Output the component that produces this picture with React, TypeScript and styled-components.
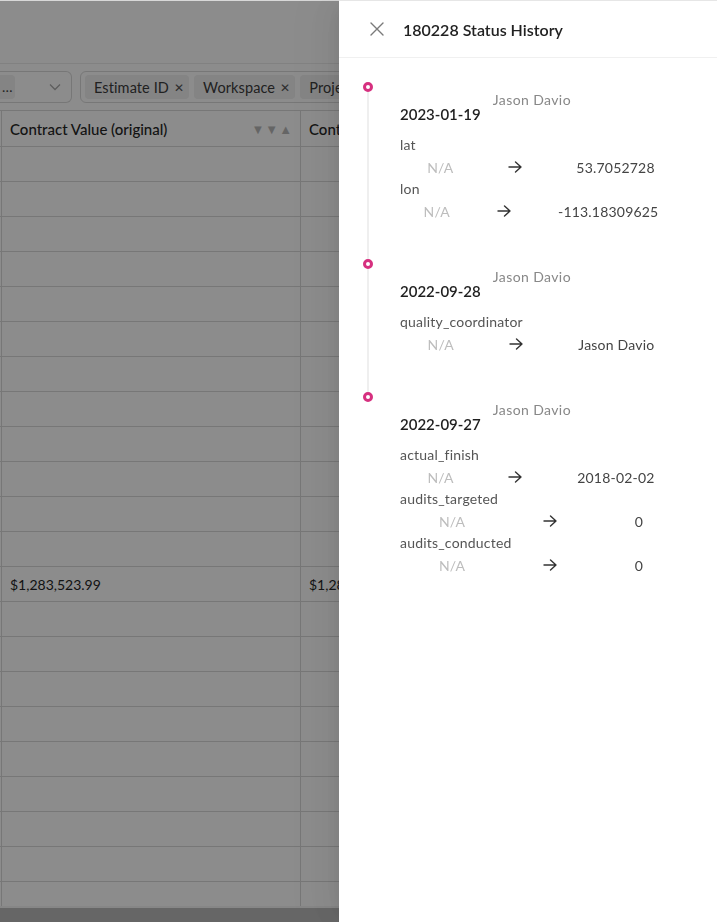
import React from "react";
import styled, { createGlobalStyle } from "styled-components";

const GlobalStyle = createGlobalStyle`
  html, body { margin: 0; padding: 0; }
  body {
    font-family: Lato, "Noto Sans", sans-serif;
    background: #ffffff;
    overflow: hidden;
  }
  * { box-sizing: border-box; }
`;

const Page = styled.div`
  height: 922px;
  display: flex;
  flex-direction: column;
  border-top: 1px solid #d8d8d8;
  overflow: hidden;
`;

const TopBar = styled.div`
  height: 63px;
  border-bottom: 1px solid #ececec;
  flex: none;
`;

const FilterRow = styled.div`
  display: flex;
  align-items: center;
  gap: 8px;
  padding: 7px 0;
  flex: none;
  white-space: nowrap;
`;

const SelectBox = styled.div`
  width: 72px;
  height: 32px;
  border: 1px solid #d9d9d9;
  border-left: none;
  border-radius: 0 6px 6px 0;
  display: flex;
  align-items: center;
  justify-content: space-between;
  padding: 0 10px 0 0;
  color: #444;
  font-size: 14px;
`;

const SelectValue = styled.span`
  background: #f0f0f0;
  height: 24px;
  line-height: 24px;
  padding: 0 2px;
  border-radius: 0 4px 4px 0;
`;

const ChipGroup = styled.div`
  height: 32px;
  border: 1px solid #d9d9d9;
  border-radius: 6px;
  display: flex;
  align-items: center;
  gap: 5px;
  padding: 0 4px;
  flex: 1;
  overflow: hidden;
`;

const Chip = styled.span`
  height: 24px;
  background: #f0f0f0;
  border-radius: 4px;
  display: inline-flex;
  align-items: center;
  gap: 5px;
  padding: 0 5px 0 9px;
  font-size: 14.5px;
  letter-spacing: 0.1px;
  color: #3c3c3c;
  flex: none;
`;

const ChipX = styled.span`
  font-size: 12px;
  color: #555;
`;

const Table = styled.div`
  flex: 1;
  border-top: 1px solid #d9d9d9;
  overflow: hidden;
  display: flex;
  flex-direction: column;
`;

const Row = styled.div<{ $head?: boolean }>`
  display: grid;
  grid-template-columns: 300px 300px 300px;
  height: ${(p) => (p.$head ? "36px" : "35px")};
  border-bottom: 1px solid #d9d9d9;
  flex: none;
`;

const Cell = styled.div<{ $head?: boolean }>`
  border-left: 1px solid #d9d9d9;
  padding: 0 8px;
  display: flex;
  align-items: center;
  justify-content: space-between;
  font-size: ${(p) => (p.$head ? "15px" : "14px")};
  font-weight: ${(p) => (p.$head ? 500 : 400)};
  color: #262626;
  white-space: nowrap;
  overflow: hidden;
  &:first-child { margin-left: 1px; }
`;

const SortIcons = styled.span`
  display: flex;
  gap: 1px;
  color: #b9b9b9;
  font-size: 13px;
`;

const ScrollBar = styled.div`
  height: 16px;
  border-top: 2px solid #f4f4f4;
  background: #bbbbbb;
  flex: none;
`;

const Overlay = styled.div`
  position: fixed;
  inset: 1px 0 0 0;
  background: rgba(0, 0, 0, 0.45);
`;

const Drawer = styled.aside`
  position: fixed;
  top: 0;
  right: 0;
  bottom: 0;
  width: 378px;
  background: #fff;
  border-top: 1px solid #e6e6e6;
  box-shadow: -6px 0 16px -8px rgba(0, 0, 0, 0.08),
    -9px 0 28px 0 rgba(0, 0, 0, 0.05), -12px 0 48px 16px rgba(0, 0, 0, 0.03);
  display: flex;
  flex-direction: column;
`;

const DrawerHeader = styled.header`
  height: 57px;
  border-bottom: 1px solid #f0f0f0;
  display: flex;
  align-items: center;
  gap: 19px;
  padding: 0 0 0 31px;
  flex: none;
`;

const CloseButton = styled.button`
  border: none;
  background: none;
  padding: 0;
  width: 14px;
  height: 14px;
  display: flex;
  color: #7a7a7a;
  cursor: pointer;
`;

const Title = styled.h2`
  margin: 0;
  font-size: 16px;
  font-weight: 600;
  color: #222;
`;

const DrawerBody = styled.div`
  padding: 24px 35px 24px 24px;
  display: flex;
  flex-direction: column;
`;

const Item = styled.div`
  display: flex;
  gap: 27px;
`;

const Rail = styled.div`
  width: 10px;
  display: flex;
  flex-direction: column;
  align-items: center;
  flex: none;
`;

const Dot = styled.span`
  width: 10px;
  height: 10px;
  border-radius: 50%;
  border: 3px solid #d6307f;
  background: #fff;
  flex: none;
`;

const Tail = styled.span<{ $hidden?: boolean }>`
  width: 2px;
  flex: 1;
  background: ${(p) => (p.$hidden ? "transparent" : "#efefef")};
`;

const Content = styled.div<{ $last?: boolean }>`
  width: 282px;
  display: flex;
  flex-direction: column;
  padding-bottom: ${(p) => (p.$last ? "0" : "37px")};
`;

const ItemHead = styled.div`
  display: flex;
  align-items: flex-start;
  gap: 12px;
  height: 44px;
  margin-bottom: 8px;
`;

const DateText = styled.span`
  margin-top: 22px;
  font-size: 15px;
  line-height: 20px;
  font-weight: 600;
  color: #1f1f1f;
`;

const Author = styled.span`
  margin-top: 9px;
  font-size: 14px;
  line-height: 18px;
  color: #888;
  letter-spacing: 0.4px;
`;

const FieldName = styled.div`
  font-size: 14px;
  line-height: 22px;
  color: #555;
  letter-spacing: 0.2px;
`;

const ChangeRow = styled.div`
  display: flex;
  justify-content: space-around;
  align-items: center;
  height: 22px;
  font-size: 14px;
  letter-spacing: 0.2px;
`;

const OldValue = styled.span`
  color: #bdbdbd;
`;

const NewValue = styled.span`
  color: #444;
`;

const ArrowIcon = () => (
  <svg width="14" height="12" viewBox="0 0 14 12" fill="none" stroke="#333" strokeWidth="1.4" strokeLinecap="round" strokeLinejoin="round">
    <path d="M1 6h12M7.5 1l5.5 5-5.5 5" />
  </svg>
);

const CloseIcon = () => (
  <svg width="14" height="14" viewBox="0 0 14 14" fill="none" stroke="currentColor" strokeWidth="1.4" strokeLinecap="round">
    <path d="M1 1l12 12M13 1L1 13" />
  </svg>
);

type Change = { field: string; from: string; to: string };
type Entry = { date: string; author: string; changes: Change[] };

const history: Entry[] = [
  {
    date: "2023-01-19",
    author: "Jason Davio",
    changes: [
      { field: "lat", from: "N/A", to: "53.7052728" },
      { field: "lon", from: "N/A", to: "-113.18309625" },
    ],
  },
  {
    date: "2022-09-28",
    author: "Jason Davio",
    changes: [{ field: "quality_coordinator", from: "N/A", to: "Jason Davio" }],
  },
  {
    date: "2022-09-27",
    author: "Jason Davio",
    changes: [
      { field: "actual_finish", from: "N/A", to: "2018-02-02" },
      { field: "audits_targeted", from: "N/A", to: "0" },
      { field: "audits_conducted", from: "N/A", to: "0" },
    ],
  },
];

const ROWS = 22;

export default function App() {
  return (
    <>
      <GlobalStyle />
      <Page>
        <TopBar />
        <FilterRow>
          <SelectBox>
            <SelectValue>…</SelectValue>
            <svg width="12" height="8" viewBox="0 0 12 8" fill="none" stroke="#aaa" strokeWidth="1.3">
              <path d="M1 1.5l5 5 5-5" />
            </svg>
          </SelectBox>
          <ChipGroup>
            <Chip>
              Estimate ID<ChipX>✕</ChipX>
            </Chip>
            <Chip>
              Workspace<ChipX>✕</ChipX>
            </Chip>
            <Chip>
              Project<ChipX>✕</ChipX>
            </Chip>
          </ChipGroup>
        </FilterRow>
        <Table>
          <Row $head>
            <Cell $head>
              Contract Value (original)
              <SortIcons>
                <span>▼</span>
                <span>▼</span>
                <span>▲</span>
              </SortIcons>
            </Cell>
            <Cell $head>Contract Value (revised)</Cell>
            <Cell $head />
          </Row>
          {Array.from({ length: ROWS }).map((_, i) => (
            <Row key={i}>
              <Cell>{i === 12 ? "$1,283,523.99" : ""}</Cell>
              <Cell>{i === 12 ? "$1,283,523.99" : ""}</Cell>
              <Cell />
            </Row>
          ))}
        </Table>
        <ScrollBar />
      </Page>
      <Overlay />
      <Drawer>
        <DrawerHeader>
          <CloseButton aria-label="Close">
            <CloseIcon />
          </CloseButton>
          <Title>180228 Status History</Title>
        </DrawerHeader>
        <DrawerBody>
          {history.map((entry, idx) => {
            const last = idx === history.length - 1;
            return (
              <Item key={entry.date}>
                <Rail>
                  <Dot />
                  <Tail $hidden={last} />
                </Rail>
                <Content $last={last}>
                  <ItemHead>
                    <DateText>{entry.date}</DateText>
                    <Author>{entry.author}</Author>
                  </ItemHead>
                  {entry.changes.map((c) => (
                    <React.Fragment key={c.field}>
                      <FieldName>{c.field}</FieldName>
                      <ChangeRow>
                        <OldValue>{c.from}</OldValue>
                        <ArrowIcon />
                        <NewValue>{c.to}</NewValue>
                      </ChangeRow>
                    </React.Fragment>
                  ))}
                </Content>
              </Item>
            );
          })}
        </DrawerBody>
      </Drawer>
    </>
  );
}
